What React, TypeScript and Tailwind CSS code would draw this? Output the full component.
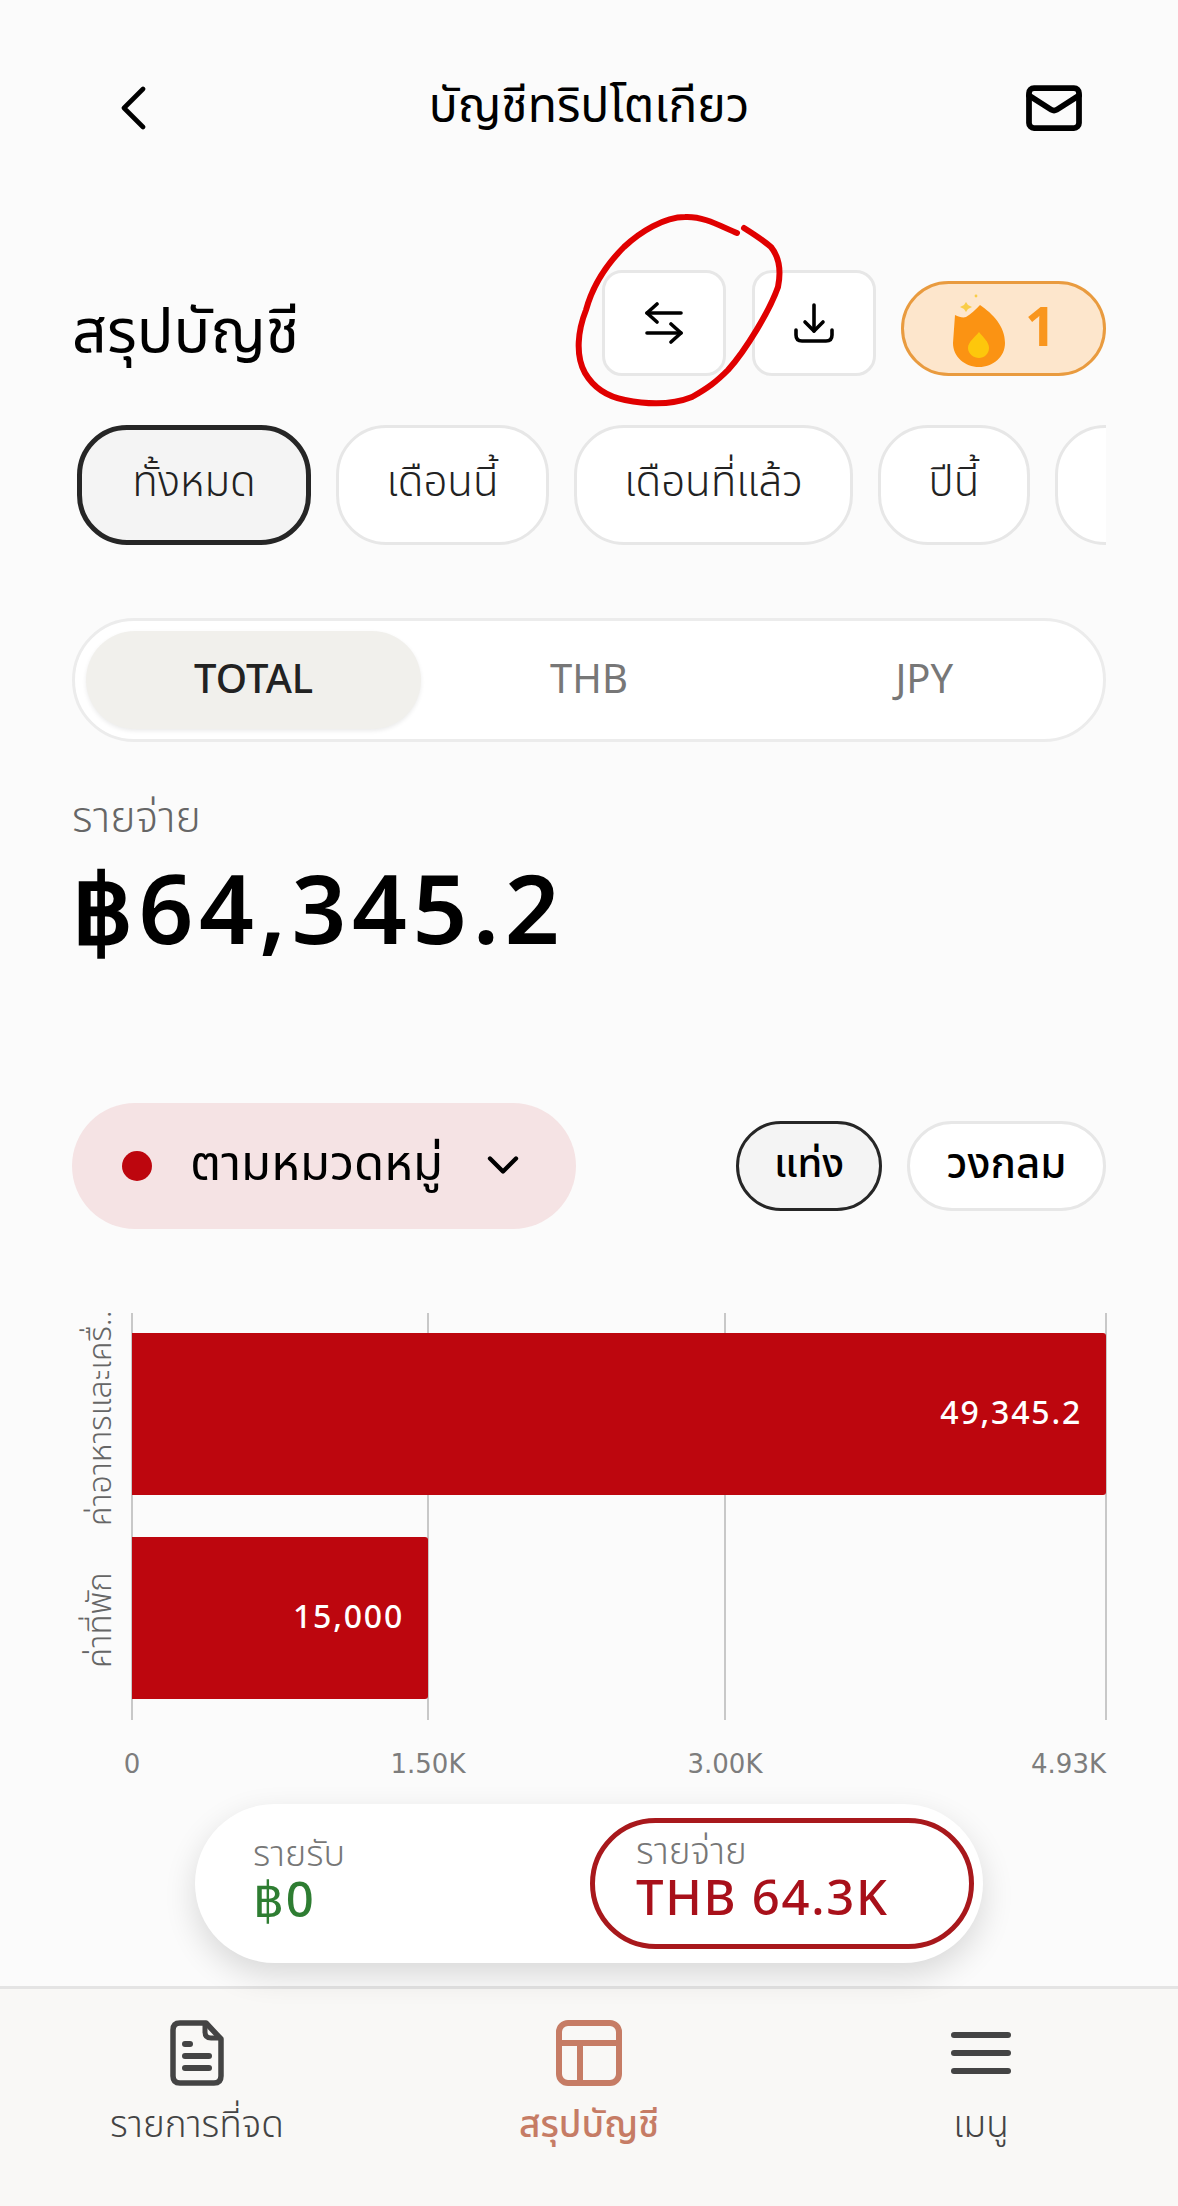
import { ChevronDown, Mail } from "lucide-react";

const chips = [
  { label: "ทั้งหมด", active: true, width: "w-[234px]" },
  { label: "เดือนนี้", active: false, width: "w-[213px]" },
  { label: "เดือนที่แล้ว", active: false, width: "w-[279px]" },
  { label: "ปีนี้", active: false, width: "w-[152px]" },
  { label: "ปีที่แล้ว", active: false, width: "w-[290px]" },
];

function SwapIcon() {
  return (
    <svg width="38" height="42" viewBox="0 0 38 42" fill="none" stroke="#000" strokeWidth="3.6" strokeLinecap="round" strokeLinejoin="round">
      <path d="M36 11H2" />
      <path d="M12 2 2 11l10 9" />
      <path d="M2 31h34" />
      <path d="m26 22 10 9-10 9" />
    </svg>
  );
}

function DownloadIcon() {
  return (
    <svg width="40" height="40" viewBox="0 0 40 40" fill="none" stroke="#000" strokeWidth="3.6" strokeLinecap="round" strokeLinejoin="round">
      <path d="M2 27v5q0 6 6 6h24q6 0 6-6v-5" />
      <path d="M20 2v26" />
      <path d="m11 19 9 9 9-9" />
    </svg>
  );
}

function Flame() {
  return (
    <svg width="56" height="78" viewBox="-2 -14 56 78" className="shrink-0">
      <path d="M2 11C6 13 10 14 13 13 18 10 23 5 27 1 40 10 52 22 52 39 52 53 40 63 26 63 12 63 0 53 0 39Z" fill="#fb9313" />
      <path d="M26 28C30 33 36 38 36 44 36 50 31 54 26 54 21 54 15 50 15 44 15 38 22 33 26 28Z" fill="#fdc70c" />
      <path d="M13 -2 15 1 19 3 15 5 13 8 11 5 7 3 11 1Z" fill="#f9cd47" />
      <circle cx="23" cy="-8" r="1.4" fill="#f9cd47" />
    </svg>
  );
}

function Chart() {
  const grid = [132, 428, 725, 1106];
  return (
    <svg width="1178" height="490" viewBox="0 1300 1178 490" className="block" style={{ fontFamily: "'DejaVu Sans', sans-serif" }}>
      {grid.map((x) => (
        <line key={x} x1={x} x2={x} y1="1313" y2="1720" stroke="#c8c8c8" strokeWidth="2" />
      ))}
      <path d="M132 1333H1103Q1106 1333 1106 1336V1492Q1106 1495 1103 1495H132Z" fill="#bd060e" />
      <path d="M132 1537H425Q428 1537 428 1540V1696Q428 1699 425 1699H132Z" fill="#bd060e" />
      <text x="1082" y="1424" textAnchor="end" fontSize="32" fontFamily="'Noto Sans', sans-serif" fontWeight="500" letterSpacing="1.8" fill="#fff">49,345.2</text>
      <text x="404" y="1628" textAnchor="end" fontSize="32" fontFamily="'Noto Sans', sans-serif" fontWeight="500" letterSpacing="1.8" fill="#fff">15,000</text>
      <text transform="translate(111 1526) rotate(-90)" fontSize="32" fontFamily="'Noto Sans Thai', 'Noto Sans', sans-serif" fontWeight="300" fill="#666">ค่าอาหารและเครื่..</text>
      <text transform="translate(111 1668) rotate(-90)" fontSize="33" fontFamily="'Noto Sans Thai', 'Noto Sans', sans-serif" fontWeight="300" fill="#666">ค่าที่พัก</text>
      <text x="132" y="1773" textAnchor="middle" fontSize="26" fill="#7d7d7d">0</text>
      <text x="428" y="1773" textAnchor="middle" fontSize="26" fill="#7d7d7d">1.50K</text>
      <text x="725" y="1773" textAnchor="middle" fontSize="26" fill="#7d7d7d">3.00K</text>
      <text x="1106" y="1773" textAnchor="end" fontSize="26" fill="#7d7d7d">4.93K</text>
    </svg>
  );
}

export default function App() {
  return (
    <div className="relative flex h-[2206px] w-[1178px] flex-col overflow-hidden bg-[#fbfbfb] font-['Noto_Sans_Thai','Noto_Sans','Open_Sans',sans-serif] text-black">
      <header className="flex h-[216px] shrink-0 items-center justify-between pl-[120px] pr-[94px]">
        <svg width="26" height="44" viewBox="0 0 26 44" fill="none" stroke="#000" strokeWidth="4.6" strokeLinecap="round" strokeLinejoin="round">
          <path d="M23 3 4 22l19 19" />
        </svg>
        <h1 className="ml-[8px] text-[48px] font-[450] leading-none">บัญชีทริปโตเกียว</h1>
        <Mail size={60} strokeWidth={2.3} />
      </header>

      <main className="flex flex-col px-[72px]">
        <div className="mt-[54px] flex h-[106px] items-start">
          <h2 className="mt-[33px] text-[61px] font-[450] leading-none">สรุปบัญชี</h2>
          <div className="ml-auto flex items-start">
            <button className="flex h-[106px] w-[124px] items-center justify-center rounded-[20px] border-[3px] border-[#e7e7e7] bg-white">
              <SwapIcon />
            </button>
            <button className="ml-[26px] flex h-[106px] w-[124px] items-center justify-center rounded-[20px] border-[3px] border-[#e7e7e7] bg-white">
              <DownloadIcon />
            </button>
            <div className="ml-[25px] mt-[11px] flex h-[95px] w-[205px] items-center justify-center gap-[18px] rounded-full border-[3px] border-[#e99b3f] bg-[#fde6cc]">
              <Flame />
              <span className="mt-[3px] text-[54px] font-bold leading-none text-[#f9961e]">1</span>
            </div>
          </div>
        </div>

        <div className="mt-[49px] flex h-[120px] gap-[25px] overflow-hidden pl-[5px]">
          {chips.map((chip) => (
            <button
              key={chip.label}
              className={
                chip.active
                  ? `h-full ${chip.width} shrink-0 rounded-[50px] border-[5px] border-[#262626] bg-[#f4f4f4] pb-[3px] text-[42px] font-light text-[#222]`
                  : `h-full ${chip.width} shrink-0 rounded-[50px] border-[3px] border-[#e7e7e7] bg-white pb-[3px] text-[42px] font-light text-[#222]`
              }
            >
              {chip.label}
            </button>
          ))}
        </div>

        <div className="mt-[73px] grid h-[124px] grid-cols-3 rounded-full border-[3px] border-[#ececec] bg-white px-[11px] py-[10px] font-['Noto_Sans',sans-serif] text-[40px]">
          <div className="flex items-center justify-center rounded-full bg-[#f1f0ec] pb-[4px] font-medium text-[#222] shadow-[0_2px_4px_rgba(0,0,0,0.08)]">TOTAL</div>
          <div className="flex items-center justify-center pb-[4px] text-[#777]">THB</div>
          <div className="flex items-center justify-center pb-[4px] text-[#777]">JPY</div>
        </div>

        <p className="mt-[54px] text-[43px] font-light leading-[46px] text-[#666]">รายจ่าย</p>
        <p className="mt-[10px] font-['Noto_Sans',sans-serif] text-[96px] font-semibold leading-[110px] tracking-[5.5px]">฿64,345.2</p>

        <div className="mt-[141px] flex h-[126px] items-center">
          <button className="flex h-full w-[504px] items-center rounded-full bg-[#f5e3e4] pb-[2px] pl-[50px]">
            <span className="mt-[2px] size-[30px] shrink-0 rounded-full bg-[#bd060e]" />
            <span className="ml-[38px] text-[49px] leading-none">ตามหมวดหมู่</span>
            <ChevronDown size={52} strokeWidth={2} className="ml-[34px]" />
          </button>
          <button className="ml-auto h-[90px] w-[146px] rounded-[45px] border-[3px] border-[#262626] bg-[#f4f4f4] pb-[2px] text-[40px] font-medium">แท่ง</button>
          <button className="ml-[25px] h-[90px] w-[199px] rounded-[45px] border-[3px] border-[#e7e7e7] bg-white pb-[2px] text-[42px] font-medium">วงกลม</button>
        </div>
      </main>

      <div className="mt-[71px] shrink-0">
        <Chart />
      </div>

      <div className="z-10 mx-[195px] mt-[14px] flex h-[159px] shrink-0 items-center rounded-[80px] bg-white pl-[58px] pr-[9px] shadow-[0_12px_32px_rgba(0,0,0,0.14)]">
        <div className="flex-1 pb-[8px]">
          <p className="text-[36px] font-light leading-[36px] text-[#777]">รายรับ</p>
          <p className="font-['Noto_Sans',sans-serif] text-[49px] font-medium leading-[50px] tracking-[1.7px] text-[#2e7d32]">฿0</p>
        </div>
        <div className="h-[131px] w-[384px] rounded-[66px] border-[5px] border-[#a8181c] pl-[41px] pt-[12px]">
          <p className="text-[37px] font-light leading-[36px] text-[#777]">รายจ่าย</p>
          <p className="font-['Noto_Sans',sans-serif] text-[49px] font-medium leading-[50px] tracking-[1.7px] text-[#a8101a]">THB 64.3K</p>
        </div>
      </div>

      <nav className="mt-[23px] grid flex-1 grid-cols-[394px_1fr_394px] border-t-[3px] border-[#e4e4e4] bg-[#f9f8f6] pt-[31px]">
        <div className="flex flex-col items-center text-[#444]">
          <svg width="54" height="66" viewBox="0 0 54 66" fill="none">
            <path d="M10 3H36L51 19V56Q51 63 44 63H10Q3 63 3 56V10Q3 3 10 3Z" stroke="#444" strokeWidth="5.5" strokeLinejoin="round" />
            <path d="M35 3V12Q35 18 41 18H51" stroke="#444" strokeWidth="5" />
            <rect x="12" y="21" width="11" height="6" rx="3" fill="#444" />
            <rect x="12" y="33" width="30" height="6" rx="3" fill="#444" />
            <rect x="12" y="45" width="30" height="6" rx="3" fill="#444" />
          </svg>
          <span className="mt-[18px] text-[37px] font-light leading-[44px]">รายการที่จด</span>
        </div>
        <div className="flex flex-col items-center text-[#c67c65]">
          <svg width="66" height="66" viewBox="0 0 66 66" fill="none" stroke="#c67c65" strokeWidth="6">
            <rect x="3" y="3" width="60" height="60" rx="9" />
            <path d="M3 23H63M24 23V63" />
          </svg>
          <span className="mt-[18px] text-[37px] font-medium leading-[44px]">สรุปบัญชี</span>
        </div>
        <div className="flex flex-col items-center text-[#444]">
          <div className="flex h-[66px] w-[60px] flex-col justify-center gap-[12px]">
            <span className="h-[6px] rounded-full bg-[#444]" />
            <span className="h-[6px] rounded-full bg-[#444]" />
            <span className="h-[6px] rounded-full bg-[#444]" />
          </div>
          <span className="mt-[18px] text-[37px] font-light leading-[44px]">เมนู</span>
        </div>
      </nav>

      <svg width="1178" height="2206" viewBox="0 0 1178 2206" fill="none" className="pointer-events-none absolute inset-0" stroke="#e00000" strokeLinecap="round" strokeWidth="6">
        <path d="M737 233C722 227 704 216 685 217 664 217 640 232 624 247 606 265 592 288 586 310 578 330 575 355 585 373 592 385 604 396 625 400 650 405 672 405 692 397 708 388 716 382 728 370 746 350 770 310 778 287 781 272 780 258 771 247 763 240 752 233 744 228" />
      </svg>
    </div>
  );
}
